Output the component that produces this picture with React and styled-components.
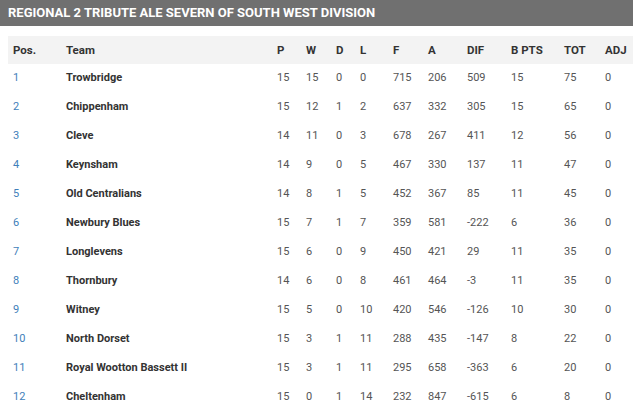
import React from "react";
import styled, { createGlobalStyle } from "styled-components";

const Global = createGlobalStyle`
  html, body { margin: 0; padding: 0; background: #fff; }
  body { font-family: Roboto, "Noto Sans", sans-serif; }
`;

const cols = "53px 211px 29px 30px 24px 33px 35px 39px 44px 53px 41px 33px";

const Wrap = styled.div`
  width: 633px;
  height: 416px;
  overflow: hidden;
  background: #fff;
`;

const TitleBar = styled.div`
  height: 26px;
  background: #707070;
  color: #fff;
  font-weight: 700;
  font-size: 13px;
  line-height: 26px;
  padding-left: 8px;
  letter-spacing: 0px;
  white-space: nowrap;
`;

const Table = styled.div`
  margin: 10px 0 0 8px;
`;

const Row = styled.div`
  display: grid;
  grid-template-columns: ${cols};
  height: ${(p) => (p.$head ? 28 : 29)}px;
  align-items: center;
  background: ${(p) => (p.$head ? "#f3f3f3" : "transparent")};
  padding-bottom: ${(p) => (p.$head ? 0 : 2)}px;
  box-sizing: border-box;
`;

const Cell = styled.div`
  padding-left: 5px;
  font-size: 11px;
  white-space: nowrap;
  color: ${(p) => (p.$pos ? "#3f7fba" : p.$head || p.$team ? "#333" : "#555")};
  font-weight: ${(p) => (p.$head || p.$team ? 700 : 400)};
  font-size: ${(p) => (p.$head ? 11.5 : 11)}px;
`;

const headers = ["Pos.", "Team", "P", "W", "D", "L", "F", "A", "DIF", "B PTS", "TOT", "ADJ"];

const data = [
  ["1", "Trowbridge", 15, 15, 0, 0, 715, 206, 509, 15, 75, 0],
  ["2", "Chippenham", 15, 12, 1, 2, 637, 332, 305, 15, 65, 0],
  ["3", "Cleve", 14, 11, 0, 3, 678, 267, 411, 12, 56, 0],
  ["4", "Keynsham", 14, 9, 0, 5, 467, 330, 137, 11, 47, 0],
  ["5", "Old Centralians", 14, 8, 1, 5, 452, 367, 85, 11, 45, 0],
  ["6", "Newbury Blues", 15, 7, 1, 7, 359, 581, -222, 6, 36, 0],
  ["7", "Longlevens", 15, 6, 0, 9, 450, 421, 29, 11, 35, 0],
  ["8", "Thornbury", 14, 6, 0, 8, 461, 464, -3, 11, 35, 0],
  ["9", "Witney", 15, 5, 0, 10, 420, 546, -126, 10, 30, 0],
  ["10", "North Dorset", 15, 3, 1, 11, 288, 435, -147, 8, 22, 0],
  ["11", "Royal Wootton Bassett II", 15, 3, 1, 11, 295, 658, -363, 6, 20, 0],
  ["12", "Cheltenham", 15, 0, 1, 14, 232, 847, -615, 6, 8, 0],
];

export default function App() {
  return (
    <Wrap>
      <Global />
      <TitleBar>REGIONAL 2 TRIBUTE ALE SEVERN OF SOUTH WEST DIVISION</TitleBar>
      <Table>
        <Row $head>
          {headers.map((h) => (
            <Cell key={h} $head>{h}</Cell>
          ))}
        </Row>
        {data.map((r) => (
          <Row key={r[0]}>
            {r.map((v, i) => (
              <Cell key={i} $pos={i === 0} $team={i === 1}>
                {String(v).replace("-", "-")}
              </Cell>
            ))}
          </Row>
        ))}
      </Table>
    </Wrap>
  );
}
